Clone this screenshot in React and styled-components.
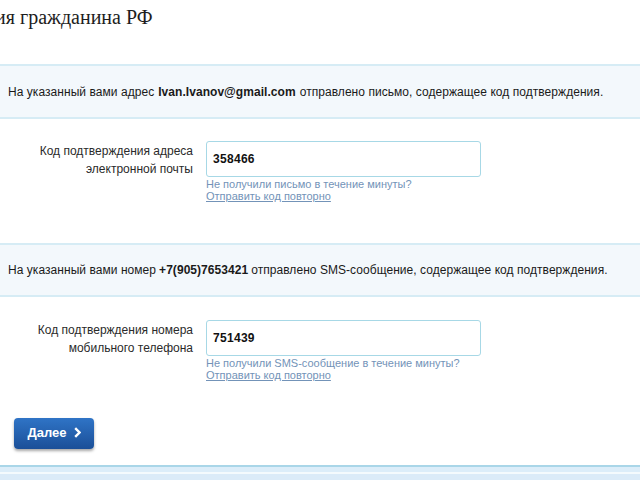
import styled, { createGlobalStyle } from "styled-components";

const GlobalStyle = createGlobalStyle`
  html, body {
    margin: 0;
    padding: 0;
    background: #fff;
    overflow: hidden;
  }
  body {
    font-family: "Liberation Sans", Arial, sans-serif;
    font-size: 12px;
    color: #222;
  }
`;

const Page = styled.div`
  width: 640px;
  height: 480px;
  overflow: hidden;
  display: flex;
  flex-direction: column;
`;

const Title = styled.h1`
  margin: 0;
  padding: 5px 0 0;
  height: 64px;
  flex-shrink: 0;
  box-sizing: border-box;
  font-family: "Liberation Serif", "Times New Roman", serif;
  font-weight: normal;
  font-size: 20px;
  line-height: 24px;
  color: #1d1d1d;
  white-space: nowrap;
  margin-left: -91px;
`;

const Notice = styled.div`
  flex-shrink: 0;
  border-top: 2px solid #d6ecf5;
  border-bottom: 2px solid #d6ecf5;
  background: #f3f8fc;
  height: ${(p) => p.h}px;
  box-sizing: border-box;
  display: flex;
  align-items: center;
  padding: 0 8px;
  font-size: 12px;
  letter-spacing: 0.05px;
  color: #1a1a1a;
  white-space: nowrap;

  b {
    margin: 0 ${(p) => p.gap}px;
  }
`;

const Row = styled.div`
  flex-shrink: 0;
  display: flex;
  gap: 13px;
  padding: ${(p) => p.pad};
`;

const Label = styled.div`
  width: 193px;
  text-align: right;
  font-size: 12px;
  line-height: 18px;
  color: #2a2a2a;
  padding-top: 1px;
`;

const Field = styled.div`
  display: flex;
  flex-direction: column;
`;

const Input = styled.div`
  width: 275px;
  height: 36px;
  box-sizing: border-box;
  border: 1px solid #a7d8e6;
  border-radius: 3px;
  padding: 0 6px;
  display: flex;
  align-items: center;
  font-weight: bold;
  font-size: 12px;
  color: #111;
  letter-spacing: 0.3px;
`;

const Hint = styled.div`
  margin-top: 1px;
  font-size: 11px;
  line-height: 12px;
  color: #7393b8;
`;

const ResendLink = styled.a`
  font-size: 11px;
  line-height: 12px;
  color: #7393b8;
  text-decoration: underline;
  cursor: pointer;
`;

const Actions = styled.div`
  flex-shrink: 0;
  padding: 37px 0 16px 14px;
`;

const NextButton = styled.button`
  width: 80px;
  height: 31px;
  border: none;
  border-radius: 4px;
  background: linear-gradient(#2f74c6, #1b4f98);
  box-shadow: 0 2px 3px rgba(0, 0, 0, 0.35);
  color: #fff;
  font-family: "Liberation Sans", Arial, sans-serif;
  font-weight: bold;
  font-size: 13px;
  display: flex;
  align-items: center;
  justify-content: center;
  gap: 7px;
  padding: 0 0 2px;
  cursor: pointer;
`;

const Footer = styled.div`
  flex: 1;
  border-top: 2px solid #a9d6e8;
  background: linear-gradient(
    #dcedf9 0,
    #dcedf9 5px,
    #f4fafd 5px,
    #f4fafd 7px,
    #dbebf8 7px
  );
`;

const Chevron = () => (
  <svg width="7" height="11" viewBox="0 0 7 11">
    <path d="M1.2 1.2 L5.5 5.5 L1.2 9.8" fill="none" stroke="#fff" strokeWidth="2.4" />
  </svg>
);

export default function App() {
  return (
    <Page>
      <GlobalStyle />
      <Title>Регистрация гражданина РФ</Title>
      <Notice h={55} gap={4}>
        На указанный вами адрес<b>Ivan.Ivanov@gmail.com</b>отправлено письмо, содержащее код подтверждения.
      </Notice>
      <Row pad="22px 0 41px">
        <Label>
          Код подтверждения адреса
          <br />
          электронной почты
        </Label>
        <Field>
          <Input>358466</Input>
          <Hint>Не получили письмо в течение минуты?</Hint>
          <ResendLink>Отправить код повторно</ResendLink>
        </Field>
      </Row>
      <Notice h={54} gap={3}>
        На указанный вами номер<b>+7(905)7653421</b>отправлено SMS-сообщение, содержащее код подтверждения.
      </Notice>
      <Row pad="23px 0 0">
        <Label>
          Код подтверждения номера
          <br />
          мобильного телефона
        </Label>
        <Field>
          <Input>751439</Input>
          <Hint>Не получили SMS-сообщение в течение минуты?</Hint>
          <ResendLink>Отправить код повторно</ResendLink>
        </Field>
      </Row>
      <Actions>
        <NextButton>
          Далее <Chevron />
        </NextButton>
      </Actions>
      <Footer />
    </Page>
  );
}
